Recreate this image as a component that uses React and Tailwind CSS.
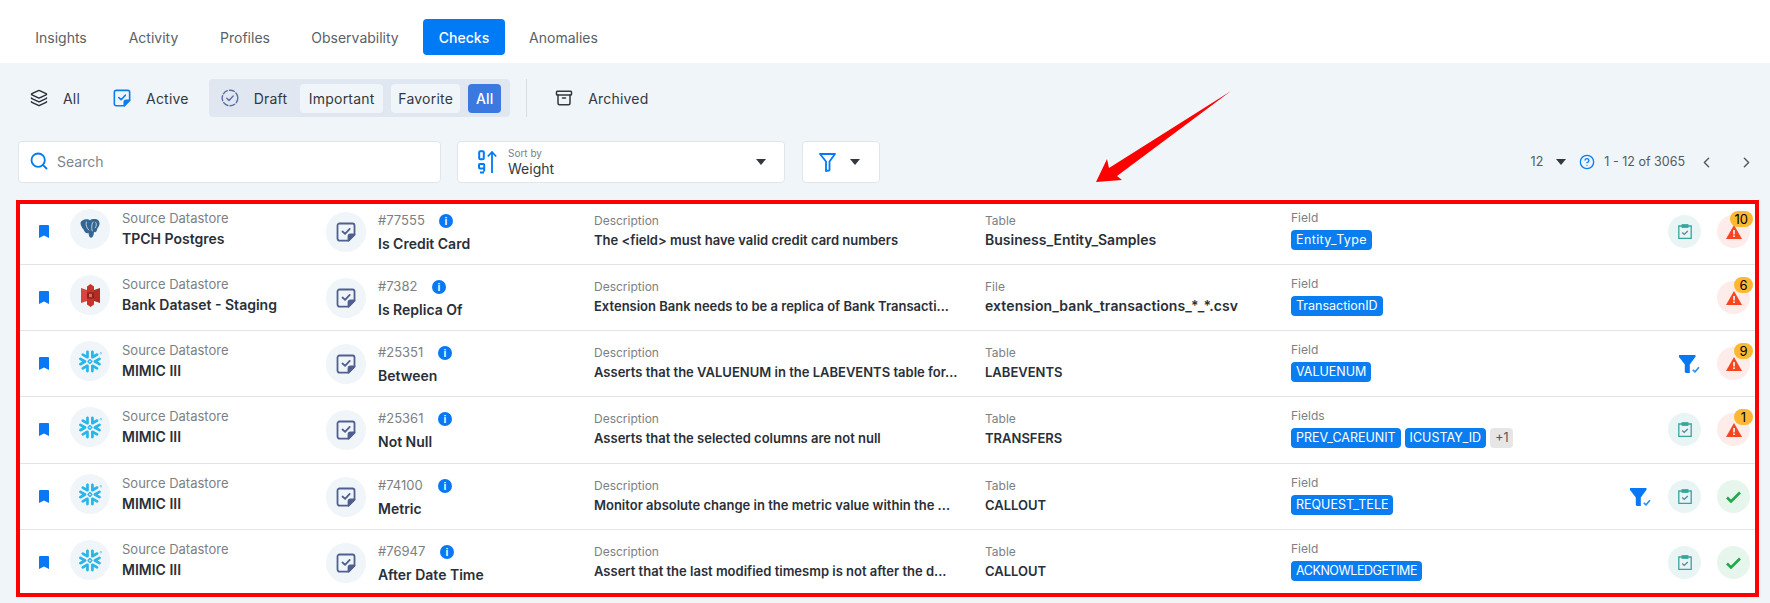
import React from "react";
import { Archive, ChevronLeft, ChevronRight, CircleHelp, Layers, Search } from "lucide-react";
import { SiSnowflake } from "react-icons/si";

const tabs = [
  { label: "Insights", w: "w-[86px]" },
  { label: "Activity", w: "w-[83px]" },
  { label: "Profiles", w: "w-[84px]" },
  { label: "Observability", w: "w-[120px]" },
  { label: "Checks", w: "w-[82px]" },
  { label: "Anomalies", w: "w-[101px]" },
];

const rows = [
  { logo: "pg", store: "TPCH Postgres", id: "#77555", idW: "w-[61px]", name: "Is Credit Card", desc: "The <field> must have valid credit card numbers", kind: "Table", target: "Business_Entity_Samples", targetCls: "text-[14px]", fieldLabel: "Field", fields: ["Entity_Type"], clip: true, count: "10" },
  { logo: "s3", store: "Bank Dataset - Staging", id: "#7382", idW: "w-[54px]", name: "Is Replica Of", desc: "Extension Bank needs to be a replica of Bank Transacti...", kind: "File", target: "extension_bank_transactions_*_*.csv", targetCls: "text-[14px] tracking-[0.1px]", fieldLabel: "Field", fields: ["TransactionID"], count: "6" },
  { logo: "sf", store: "MIMIC III", id: "#25351", idW: "w-[60px]", name: "Between", desc: "Asserts that the VALUENUM in the LABEVENTS table for...", kind: "Table", target: "LABEVENTS", targetCls: "text-[13px]", fieldLabel: "Field", fields: ["VALUENUM"], filter: true, count: "9" },
  { logo: "sf", store: "MIMIC III", id: "#25361", idW: "w-[60px]", name: "Not Null", desc: "Asserts that the selected columns are not null", kind: "Table", target: "TRANSFERS", targetCls: "text-[13px]", fieldLabel: "Fields", fields: ["PREV_CAREUNIT", "ICUSTAY_ID"], extra: "+1", clip: true, count: "1" },
  { logo: "sf", store: "MIMIC III", id: "#74100", idW: "w-[60px]", name: "Metric", desc: "Monitor absolute change in the metric value within the ...", kind: "Table", target: "CALLOUT", targetCls: "text-[13px]", fieldLabel: "Field", fields: ["REQUEST_TELE"], filter: true, clip: true },
  { logo: "sf", store: "MIMIC III", id: "#76947", idW: "w-[62px]", name: "After Date Time", desc: "Assert that the last modified timesmp is not after the d...", kind: "Table", target: "CALLOUT", targetCls: "text-[13px]", fieldLabel: "Field", fields: ["ACKNOWLEDGETIME"], clip: true },
];

// the original font runs a bit wider or narrower on these two
const chipTracking = {
  Entity_Type: "tracking-[0.4px]",
  ACKNOWLEDGETIME: "tracking-[-0.45px]",
};

function Caret({ className = "" }) {
  return (
    <svg width="10" height="6" viewBox="0 0 10 6" className={className}>
      <path d="M0 0h10L5 6z" fill="#33383f" />
    </svg>
  );
}

function NoteCheck({ size = 20, color = "#4f6090" }) {
  return (
    <svg width={size} height={size} viewBox="0 0 20 20" fill="none" stroke={color} strokeWidth="1.8" strokeLinejoin="round" strokeLinecap="round">
      <path d="M12.5 18.6H3.5a2 2 0 0 1-2-2V3.5a2 2 0 0 1 2-2h13a2 2 0 0 1 2 2v9z" />
      <path d="M18.5 12.5l-6 6v-4a2 2 0 0 1 2-2z" fill={color} />
      <path d="M6.5 9.5l2.6 2.4 4.6-5" />
    </svg>
  );
}

function DashedCheck() {
  return (
    <svg width="18" height="18" viewBox="0 0 18 18" fill="none" stroke="#5d6ea3" strokeWidth="1.4" strokeLinecap="round" strokeLinejoin="round">
      <circle cx="9" cy="9" r="7.8" strokeDasharray="5 2.2" />
      <path d="M5.8 9.2l2.2 2.2 4.2-4.4" />
    </svg>
  );
}

function SortIcon() {
  return (
    <svg width="19" height="24" viewBox="0 0 19 24" fill="none">
      <rect x="1.2" y="1.2" width="4.6" height="8" rx="1" stroke="#007bf5" strokeWidth="2" />
      <path d="M6 22.5H2M6.2 18.8V15a1 1 0 0 0-1-1H2a1 1 0 0 0-1 1v2.4a1 1 0 0 0 1 1h4.2v3" stroke="#007bf5" strokeWidth="2" />
      <path d="M14 23V2M9.8 6.5L14 2l4.2 4.5" stroke="#007bf5" strokeWidth="1.8" />
    </svg>
  );
}

function FilterOutline() {
  return (
    <svg width="17" height="19" viewBox="0 0 17 19" fill="none" stroke="#007bf5" strokeWidth="1.8" strokeLinejoin="round">
      <path d="M1 1h15l-5.5 7.5v8.8L7 18V8.5z" />
    </svg>
  );
}

function FilterCheck() {
  return (
    <svg width="21" height="19" viewBox="0 0 21 19" className="mt-[24px]">
      <path d="M0 0h16.5v1.8L10.8 9.5V18H6.8l-1-1V9.5L0 2z" fill="#0a78f5" />
      <path d="M13.8 14.8l2.2 2 4-4.6" fill="none" stroke="#2d8cf0" strokeWidth="1.6" />
    </svg>
  );
}

function PgLogo() {
  return (
    <svg width="22" height="21" viewBox="0 0 24 22" className="mb-[2px]">
      <path d="M4 2C7 0 11 1 12 2c2-1.5 7-2 9.5.5 2 2.500.5 6.500-1.500 8.500-.5 3-2 5-3.500 3.500-.5 2.500-.5 5.500-3 6.500-2 .5-3-2-3-5-2.500 1-4.500-1-5.500-4C3 10 1 6 2 3.500z" fill="#336791" />
      <path d="M8 3.500C7 8 9 11 11 13M15.500 3.500C13.500 7 13.500 10 14.500 14M18 4c1.500 2 1 4.500-.5 6.500" fill="none" stroke="#c9d6e6" strokeWidth="1" />
    </svg>
  );
}

function S3Logo() {
  return (
    <svg width="19" height="23" viewBox="0 0 19 23">
      <path d="M6 2.500L9.500 0 13 2.500V20.500L9.500 23 6 20.500z" fill="#c7342c" />
      <path d="M0 4l6 2v11l-6 2z" fill="#d9453a" />
      <path d="M19 4l-6 2v11l6 2z" fill="#b02d26" />
      <path d="M6 8.800l3.500-.8 3.500.8v5.400l-3.500.8-3.500-.8z" fill="#8e211c" />
      <rect x="8" y="9.800" width="3" height="3.400" fill="#e46a5f" />
    </svg>
  );
}

function Logo({ type }) {
  return (
    <div className="flex h-10 w-10 items-center justify-center rounded-full bg-[#f0f5fa]">
      {type === "pg" && <PgLogo />}
      {type === "s3" && <S3Logo />}
      {type === "sf" && <SiSnowflake size={23} className="text-[#29b5e8]" />}
    </div>
  );
}

function Clipboard() {
  return (
    <div className="flex h-[33px] w-[33px] items-center justify-center rounded-full bg-[#e8f5f4]">
      <svg width="14" height="15" viewBox="0 0 14 15" fill="none" stroke="#36a69b" strokeWidth="1.3">
        <path d="M4 2H.8v12.300h12.400V2H10" />
        <rect x="4.200" y=".8" width="5.600" height="2.400" fill="#36a69b" />
        <path d="M4.200 8.600l2 1.800 3.600-3.400" stroke="#5d83a8" strokeWidth="1.4" />
      </svg>
    </div>
  );
}

function Status({ count }) {
  if (!count) {
    return (
      <div className="flex h-[33px] w-[33px] items-center justify-center rounded-full bg-[#e7f6ec]">
        <svg width="15" height="12" viewBox="0 0 15 12" fill="none" stroke="#21a84a" strokeWidth="2.600">
          <path d="M1 6.500l4 4L14 1.500" />
        </svg>
      </div>
    );
  }
  return (
    <div className="relative flex h-[33px] w-[33px] items-center justify-center rounded-full bg-[#fdecea]">
      <svg width="16" height="14" viewBox="0 0 16 14" className="mt-[1px]">
        <path d="M8 0l8 14H0z" fill="#f8451f" />
        <rect x="7.200" y="5" width="1.600" height="4.400" fill="#fff" />
        <rect x="7.200" y="10.400" width="1.600" height="1.600" fill="#fff" />
      </svg>
      <span className="absolute right-[-3px] top-[-4px] flex h-4 min-w-[19px] items-center justify-center rounded-full bg-[#fdb833] px-[5px] text-[13px] leading-4 text-black">
        {count}
      </span>
    </div>
  );
}

function Row({ row, last, tall }) {
  return (
    <div className={`grid grid-cols-[52px_52px_204px_52px_216px_391px_306px_1fr] ${tall ? "h-[67px]" : "h-[66px]"} ${last ? "" : "border-b border-[#e2e4e7]"}`}>
      <div className="pl-[21px] pt-[26px]">
        <svg width="10" height="13" viewBox="0 0 10 13">
          <path d="M1 0h8a1 1 0 0 1 1 1v12L5 10.600 0 13V1a1 1 0 0 1 1-1z" fill="#0a78f5" />
        </svg>
      </div>
      <div className="pt-[10px]">
        <Logo type={row.logo} />
      </div>
      <div className="pt-[10px]">
        <div className="text-[13px] leading-[18px] text-[#7c7f84]">Source Datastore</div>
        <div className="text-[14px] font-semibold leading-[24px] text-[#2a2f38]">{row.store}</div>
      </div>
      <div className="pt-[13px]">
        <div className="flex h-10 w-10 items-center justify-center rounded-full bg-[#f0f5fa]">
          <NoteCheck />
        </div>
      </div>
      <div className="pt-[13px]">
        <div className="flex h-[18px] items-center text-[13px] text-[#7c7f84]">
          <span className={row.idW}>{row.id}</span>
          <span className="flex h-[14px] w-[14px] items-center justify-center rounded-full bg-[#0a78f5] font-['Liberation_Sans',sans-serif] text-[10px] font-bold text-white">i</span>
        </div>
        <div className="text-[14px] font-semibold leading-[28px] text-[#2a2f38]">{row.name}</div>
      </div>
      <div className="pt-[13px]">
        <div className="text-[12px] leading-[18px] text-[#7c7f84]">Description</div>
        <div className="whitespace-nowrap text-[13px] font-semibold leading-[20px] text-[#2a2f38]">{row.desc}</div>
      </div>
      <div className="pt-[13px]">
        <div className="text-[12px] leading-[18px] text-[#7c7f84]">{row.kind}</div>
        <div className={`whitespace-nowrap font-semibold leading-[20px] text-[#2a2f38] ${row.targetCls}`}>{row.target}</div>
      </div>
      <div className="flex justify-between pr-[7px]">
        <div className="pt-[10px]">
          <div className="text-[12px] leading-[18px] text-[#7c7f84]">{row.fieldLabel}</div>
          <div className="mt-[3px] flex gap-1">
            {row.fields.map((f) => (
              <span key={f} className={`h-5 rounded-[4px] bg-[#0a7df0] px-[5px] text-[12.5px] leading-5 text-white ${chipTracking[f] || ""}`}>{f}</span>
            ))}
            {row.extra && (
              <span className="h-5 rounded-[4px] bg-[#e6e6e6] px-[5px] text-[12.5px] leading-5 text-[#555]">{row.extra}</span>
            )}
          </div>
        </div>
        <div className="flex items-start pt-[16px]">
          {row.filter && (
            <div className={`-mt-[16px] ${row.clip ? "mr-[17px]" : "mr-[1px]"}`}>
              <FilterCheck />
            </div>
          )}
          {row.clip && <Clipboard />}
          <div className="ml-4">
            <Status count={row.count} />
          </div>
        </div>
      </div>
    </div>
  );
}

export default function App() {
  return (
    <div className="relative h-[603px] overflow-hidden bg-[#f0f5fa] font-['Inter',sans-serif] text-[#33383f]">
      <div className="flex h-[63px] gap-2 bg-white pl-[18px] pt-[19px]">
        {tabs.map((t) => (
          <div key={t.label} className={`flex h-9 items-center justify-center rounded-[4px] text-[14px] ${t.w} ${t.label === "Checks" ? "bg-[#007bf5] font-medium text-white" : "text-[#5b5f66]"}`}>
            {t.label}
          </div>
        ))}
      </div>

      <div className="ml-[30px] mt-4 flex h-[38px] items-center text-[14px] tracking-[0.2px]">
        <Layers size={18} strokeWidth={2} className="text-[#2a2f38]" />
        <span className="ml-[15px]">All</span>
        <span className="ml-[33px]"><NoteCheck size={18} color="#0a7df0" /></span>
        <span className="ml-[15px]">Active</span>
        <div className="ml-5 flex h-[38px] items-center rounded-[4px] bg-[#e1e7f0] pl-3 pr-[9px]">
          <DashedCheck />
          <span className="ml-[15px]">Draft</span>
          <span className="ml-[13px] flex h-[29px] w-[83px] items-center justify-center rounded-[4px] bg-[#f0f5fa]">Important</span>
          <span className="ml-2 flex h-[29px] w-[69px] items-center justify-center rounded-[4px] bg-[#f0f5fa]">Favorite</span>
          <span className="ml-2 flex h-[29px] w-[33px] items-center justify-center rounded-[4px] bg-[#3b78e0] font-medium text-white">All</span>
        </div>
        <div className="ml-4 h-[38px] w-px bg-[#d8dde3]" />
        <Archive size={18} strokeWidth={2} className="ml-[28px] text-[#33383f]" />
        <span className="ml-[15px]">Archived</span>
      </div>

      <div className="ml-[18px] mr-[15px] mt-6 flex h-[42px] items-center">
        <div className="flex h-[42px] w-[423px] items-center rounded-[4px] border border-[#e2e6ea] bg-white pb-[2px] pl-[10px]">
          <Search size={20} strokeWidth={2.2} className="text-[#007bf5]" />
          <span className="ml-[8px] text-[14px] text-[#80848a]">Search</span>
        </div>
        <div className="ml-4 flex h-[42px] w-[328px] items-center rounded-[4px] border border-[#e2e6ea] bg-white pl-[20px]">
          <SortIcon />
          <div className="ml-[11px] flex flex-col">
            <span className="text-[10px] leading-[13px] text-[#7c7f84]">Sort by</span>
            <span className="text-[14px] leading-[17px]">Weight</span>
          </div>
          <Caret className="ml-auto mr-[18px]" />
        </div>
        <div className="ml-[17px] flex h-[42px] w-[78px] items-center rounded-[4px] border border-[#e2e6ea] bg-white pl-4">
          <FilterOutline />
          <Caret className="ml-[14px]" />
        </div>
        <div className="ml-auto flex items-center text-[12.5px] text-[#555a61]">
          <span>12</span>
          <Caret className="ml-[13px]" />
          <CircleHelp size={16} strokeWidth={2} className="ml-[13px] text-[#0a7df0]" />
          <span className="ml-[9px]">1 - 12 of 3065</span>
          <ChevronLeft size={17} strokeWidth={2} className="ml-[13px]" />
          <ChevronRight size={17} strokeWidth={2} className="ml-[23px]" />
        </div>
      </div>

      <div className="relative ml-[18px] mr-[13px] mt-4 bg-white">
        {rows.map((row, i) => (
          <Row key={row.id} row={row} last={i === rows.length - 1} tall={i === 3} />
        ))}
        {/* red annotation frame from the screenshot */}
        <div className="pointer-events-none absolute bottom-[-1px] left-[-2px] right-[-2px] top-[1px] border-4 border-[#ff0000]" />
      </div>

      <svg width="1770" height="603" className="pointer-events-none absolute left-0 top-0">
        <polygon points="1231,91 1109,168 1107,159 1096,182 1122,180 1117,176" fill="#ff0000" />
      </svg>
    </div>
  );
}
